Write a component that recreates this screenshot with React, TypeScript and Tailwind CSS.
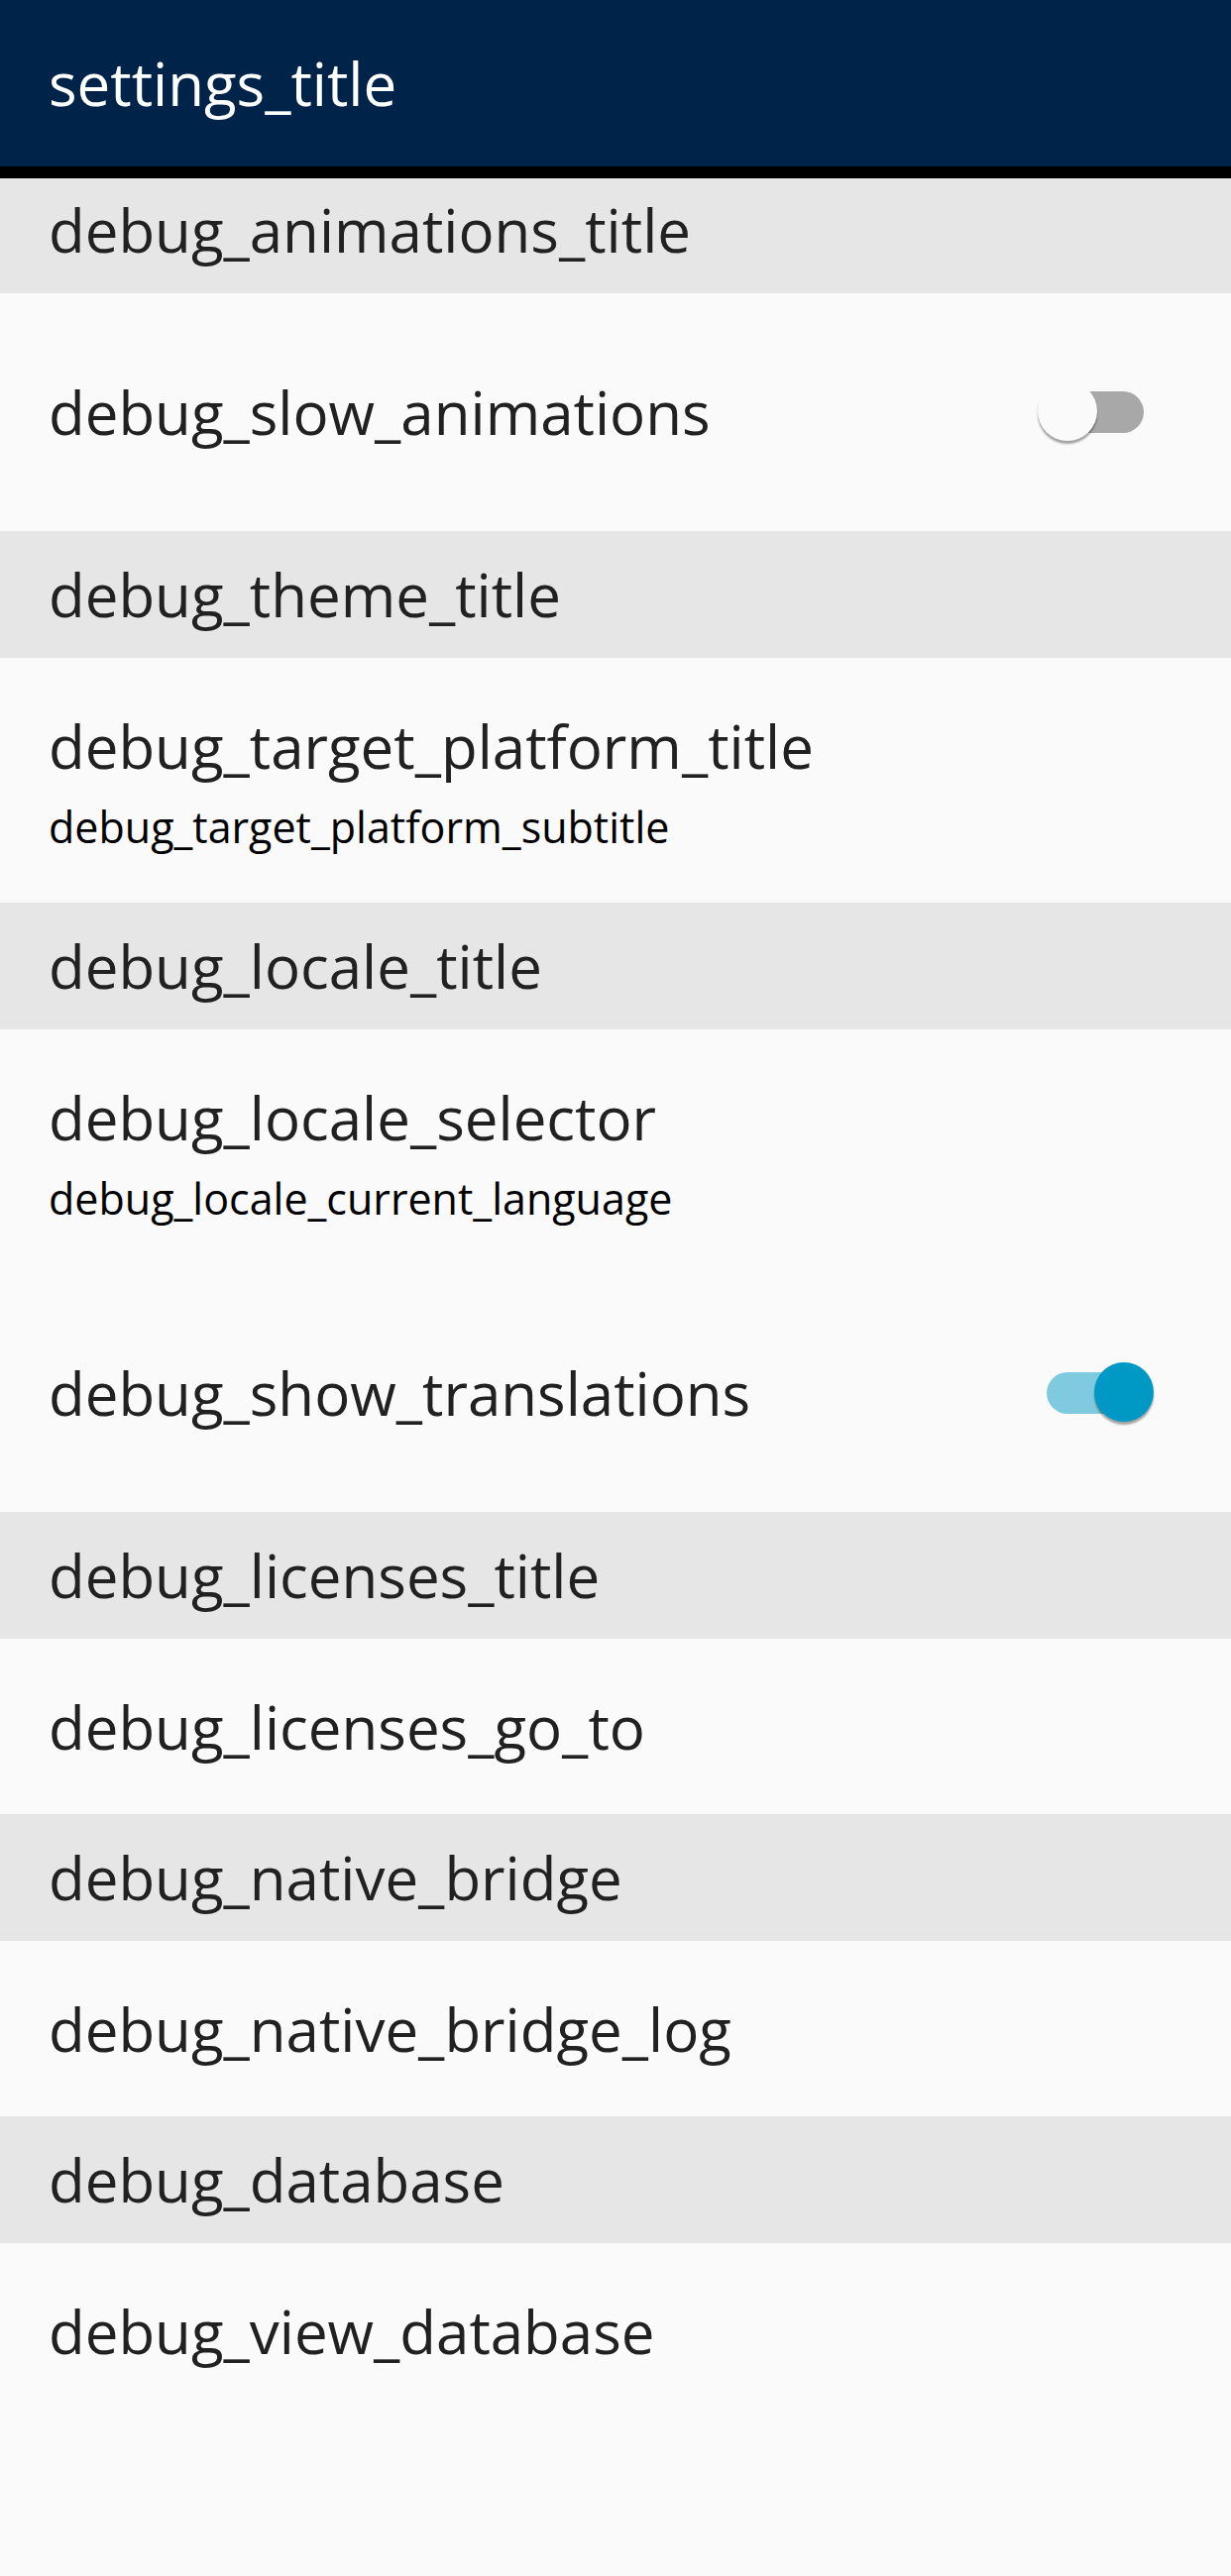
type Row =
  | { kind: "section"; title: string }
  | { kind: "item"; title: string; subtitle?: string; toggle?: boolean };

const ROWS: Array<Row> = [
  { kind: "section", title: "debug_animations_title" },
  { kind: "item", title: "debug_slow_animations", toggle: false },
  { kind: "section", title: "debug_theme_title" },
  { kind: "item", title: "debug_target_platform_title", subtitle: "debug_target_platform_subtitle" },
  { kind: "section", title: "debug_locale_title" },
  { kind: "item", title: "debug_locale_selector", subtitle: "debug_locale_current_language" },
  { kind: "item", title: "debug_show_translations", toggle: true },
  { kind: "section", title: "debug_licenses_title" },
  { kind: "item", title: "debug_licenses_go_to" },
  { kind: "section", title: "debug_native_bridge" },
  { kind: "item", title: "debug_native_bridge_log" },
  { kind: "section", title: "debug_database" },
  { kind: "item", title: "debug_view_database" },
];

function Toggle({ on }: { on: boolean }) {
  if (on) {
    return (
      <div className="relative w-[108px] h-[62px] mr-[78px] flex items-center">
        <div className="w-[102px] h-[42px] rounded-full bg-[#80cae0]" />
        <div className="absolute right-0 top-0 w-[60px] h-[60px] rounded-full bg-[#0099c6] shadow-[0_3px_2px_rgba(0,0,0,0.35)]" />
      </div>
    );
  }
  return (
    <div className="relative w-[107px] h-[62px] mr-[88px] flex items-center justify-end">
      <div className="w-[102px] h-[42px] rounded-full bg-[#a8a8a8]" />
      <div className="absolute left-0 top-0 w-[60px] h-[60px] rounded-full bg-[#fafafa] shadow-[0_3px_2px_rgba(0,0,0,0.35)]" />
    </div>
  );
}

export default function App() {
  return (
    <div
      className="min-h-[2600px] w-[1242px] bg-[#fafafa] text-[#212121]"
      style={{ fontFamily: '"Open Sans", "Noto Sans", sans-serif' }}
    >
      {/* App bar */}
      <div className="relative h-[168px] bg-[#002349] flex items-center px-[49px]">
        <span className="text-white text-[60px] leading-none">settings_title</span>
        <div className="absolute left-0 right-0 top-full h-[12px] bg-black z-10" />
      </div>

      {ROWS.map((row, i) =>
        row.kind === "section" ? (
          <div key={i} className="h-[128px] bg-[#e6e6e6] flex items-center px-[49px]">
            <span className="text-[60px] leading-none">{row.title}</span>
          </div>
        ) : row.subtitle ? (
          <div key={i} className="h-[247px] flex flex-col justify-center px-[49px]">
            <span className="text-[60px] leading-[82px]">{row.title}</span>
            <span className="mt-[12px] text-[43px] leading-[58px] text-black">{row.subtitle}</span>
          </div>
        ) : row.toggle !== undefined ? (
          <div key={i} className="h-[240px] flex items-center justify-between pl-[49px]">
            <span className="text-[60px] leading-none">{row.title}</span>
            <Toggle on={row.toggle} />
          </div>
        ) : (
          <div key={i} className="h-[177px] flex items-center px-[49px]">
            <span className="text-[60px] leading-none">{row.title}</span>
          </div>
        )
      )}
    </div>
  );
}
